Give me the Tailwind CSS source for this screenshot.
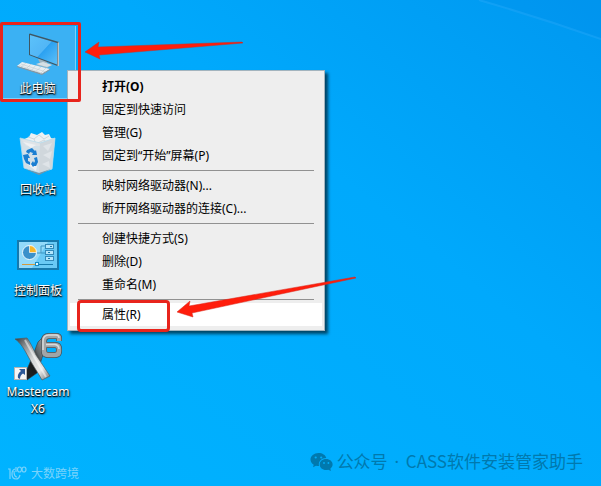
<!DOCTYPE html>
<html lang="zh-CN">

<head>
    <meta charset="UTF-8">
    <meta name="viewport" content="width=device-width, initial-scale=1.0">
    <title>此电脑</title>
    <script src="https://cdn.jsdelivr.net/npm/@tailwindcss/browser@4"></script>
</head>

<body class="font-['Noto_Sans','Noto_Sans_CJK_SC',sans-serif] text-xs">
    <main class="relative flex flex-col min-h-screen overflow-hidden bg-linear-to-bl from-[#0098f0] via-[#00a9fc] via-40% to-[#00b3ff]">
        <!-- light ray -->
        <svg class="absolute top-0 right-0 w-[130px] h-12" viewBox="0 0 130 48" fill="none">
            <path d="M8 0 L130 39 V0 Z" fill="#0090ea" opacity=".3" />
            <path d="M8 0 Q70 18 130 39" stroke="#35b4ff" stroke-width="2" opacity=".3" />
        </svg>

        <!-- desktop icons -->
        <nav class="flex flex-col items-start gap-7 w-[76px] pt-[26px] text-white leading-[17px]">
            <button class="flex flex-col items-center gap-[3px] w-full h-[73px] pt-[3px] bg-[#3bb1f3] border-r border-b border-[#7fd0fa]">
                <svg class="size-12 shrink-0" viewBox="0 0 48 48">
                    <defs>
                        <linearGradient id="screen" x1="0" y1="0" x2="1" y2="1">
                            <stop offset="0" stop-color="#5cc2fa" />
                            <stop offset=".5" stop-color="#52b6f6" />
                            <stop offset=".52" stop-color="#2ba1f1" />
                            <stop offset="1" stop-color="#5cc0f8" />
                        </linearGradient>
                    </defs>
                    <path d="M24 30 L33 31 V34 L38 36 L33 39 L22 36 L26 34 Z" fill="#9eb5c1" />
                    <path d="M22 35 L29 33 L38 36 L33 38 Z" fill="#d5e0e5" />
                    <path d="M15 5 L16 4.500 L45 13 V37 L43.500 37 L15 26 Z" fill="#3f5763" />
                    <path d="M16 6 L43 14 V35.500 L16 25.500 Z" fill="url(#screen)" />
                    <path d="M43.500 14 L45 13 V37 L43.500 37 Z" fill="#b9c6cc" />
                    <path d="M8 33 L36 40 L28 45 L3 37 Z" fill="#e8eef1" />
                    <path d="M3 37 L28 44.500 L36 40 V41 L28 46 L3 38 Z" fill="#8796a0" />
                    <path d="M7 35 L32 43 M5 36.500 L29 44.500 M12 34 L7 38 M17 35 L12 40 M22 36 L17 42 M27 38 L21 43 M32 39 L26 45" stroke="#b8c4ca" stroke-width=".5" />
                </svg>
                <span class="[text-shadow:1px_1px_2px_#000,0_1px_1px_#000]">此电脑</span>
            </button>

            <button class="flex flex-col items-center gap-[3px] w-full h-[73px] pt-[3px]">
                <svg class="size-12 shrink-0" viewBox="0 0 48 48">
                    <path d="M8 10 L15 7 L17 3 L23 5 L28 2 L31 5 L35 4 L37 8 L41 9 L37 16 H12 Z" fill="#edf1f3" />
                    <path d="M14 7 L20 9 L25 5 L30 9 L35 6 M20 9 L22 14 L30 10 L35 14" fill="none" stroke="#cfd7dc" stroke-width="1" />
                    <path d="M6 8 L26 13 L41 8 L38 39 L25 43 L10 38 Z" fill="#dde3e7" fill-opacity=".95" />
                    <path d="M26 13 L41 8 L38 39 L25 43 Z" fill="#d0d7dc" />
                    <path d="M29 16 L38 13 L34 21 Z M29 25 L38 21 L36 29 Z M28 34 L35 31 L36 38 Z" fill="#dfe4e8" />
                    <path d="M9 12 L22 15 L17 18 Z M13 34 L23 36 L22 41 Z" fill="#eef1f3" />
                    <path d="M6 8 L26 13 L41 8 M6 8 L10 38 L25 43 L38 39 L41 8" fill="none" stroke="#b5dcee" stroke-width=".8" />
                    <path d="M11 39 L25 43 L37 39 L25 45 Z" fill="#7795a6" />
                    <!-- recycle arrows -->
                    <path d="M13 20 L18 18 L21 21 L22 20 L23 25 L18 25 L19 23 L16 22 L15 24 L12 22 Z" fill="#1a7fd2" />
                    <path d="M9 25 L14 24 L16 28 L14 28 L14 31 L16 32 L16 35 L12 33 L10 29 Z" fill="#1a7fd2" />
                    <path d="M20 28 L23 27 L24 32 L22 36 L20 36 L19 37 L17 34 L19 31 L20 33 L21 31 Z" fill="#1a7fd2" />
                </svg>
                <span class="[text-shadow:1px_1px_2px_#000,0_1px_1px_#000]">回收站</span>
            </button>

            <button class="flex flex-col items-center gap-[3px] w-full h-[73px] pt-[3px]">
                <svg class="size-12 shrink-0" viewBox="0 0 48 48">
                    <rect x="3" y="9" width="42" height="30" fill="#1679ad" />
                    <rect x="5" y="11" width="38" height="26" fill="#69c9f5" />
                    <path d="M5 11 H34 L18 37 H5 Z" fill="#93dafa" />
                    <circle cx="15.500" cy="21.500" r="7" fill="#3a91cb" stroke="#eefaff" stroke-width="1" />
                    <path d="M15.500 21.500 V14.500 A7 7 0 0 1 22.500 21.500 Z" fill="#f8b72b" stroke="#fff" stroke-width=".7" />
                    <path d="M23 22 H27 V15 H31 M27 22 H31" fill="none" stroke="#3d95c2" stroke-width="1" />
                    <g fill="#b4e6fc" stroke="#3489b8">
                        <rect x="31.500" y="13.500" width="8" height="4" />
                        <rect x="31.500" y="19.500" width="8" height="4" />
                        <rect x="31.500" y="25.500" width="8" height="4" />
                    </g>
                    <path d="M36 15.500 H38 M34 21.500 H36 M34 27.500 H36" stroke="#167bae" />
                    <path d="M8 33.500 H22" stroke="#d29a3d" />
                    <path d="M24 33.500 H39" stroke="#167bae" />
                    <rect x="21.500" y="31.500" width="3" height="3" fill="#e7f9ff" stroke="#168bc4" />
                </svg>
                <span class="[text-shadow:1px_1px_2px_#000,0_1px_1px_#000]">控制面板</span>
            </button>

            <button class="flex flex-col items-center gap-[3px] w-full pt-[3px]">
                <svg class="size-12 shrink-0 overflow-visible" viewBox="0 0 48 48">
                    <defs>
                        <linearGradient id="metal" x1="0" y1="0" x2="1" y2="1">
                            <stop offset="0" stop-color="#32383c" />
                            <stop offset=".25" stop-color="#8d9295" />
                            <stop offset=".5" stop-color="#d4d6d7" />
                            <stop offset=".75" stop-color="#e8e8e8" />
                            <stop offset="1" stop-color="#6d7376" />
                        </linearGradient>
                        <linearGradient id="dark" x1="1" y1="0" x2="0" y2="1">
                            <stop offset="0" stop-color="#aeb3b5" />
                            <stop offset=".4" stop-color="#5c6266" />
                            <stop offset=".55" stop-color="#16191b" />
                            <stop offset="1" stop-color="#202326" />
                        </linearGradient>
                    </defs>
                    <path d="M24 10 L32 2 L31 17 L23 41 L13 48 L11 42 L17 28 Z" fill="url(#dark)" stroke="#343b40" stroke-width=".6" />
                    <path d="M1 7 L13 6 C16 10 19 16 22 23 L36 44 L28 48 C23 39 18 32 15 26 C10 17 7 11 1 7 Z" fill="url(#metal)" stroke="#53595c" stroke-width=".7" />
                    <path d="M11 8 L22 28 L32 45" fill="none" stroke="#fff" stroke-width="2" opacity=".5" />
                    <path d="M45 9 V6 Q45 4 42 4 H35 Q30 4 30 9 V19 Q30 23 34 23 H41 Q45 23 45 19 V17 Q45 13 41 13 H32" fill="none" stroke="#4a5054" stroke-width="6" />
                    <path d="M45 9 V6 Q45 4 42 4 H35 Q30 4 30 9 V19 Q30 23 34 23 H41 Q45 23 45 19 V17 Q45 13 41 13 H32" fill="none" stroke="#a0a5a8" stroke-width="4.500" />
                    <path d="M45 6 Q45 3 42 3 H35 Q29 3 29 9 V18 M32 12.500 H41 Q45 13 45 17" fill="none" stroke="#d9dbdc" stroke-width="1.500" />
                    <!-- shortcut badge -->
                    <rect x="0.500" y="35.500" width="12" height="12" fill="#f5f5f5" stroke="#b4b4b4" />
                    <path d="M5 37 H11 V43 L9 41.500 Q6 43 6 47 L4 46 Q3 42 7 39 Z" fill="#2b5797" />
                </svg>
                <span class="[text-shadow:1px_1px_2px_#000,0_1px_1px_#000]">Mastercam X6</span>
            </button>
        </nav>

        <!-- context menu -->
        <ul role="menu" class="absolute left-[67px] top-[70px] w-[258px] py-1 px-0.5 bg-[#eeeeee] border border-[#a3b4be] shadow-[3px_3px_3px_rgba(0,0,0,0.6)] text-black leading-[23px]">
            <li><button role="menuitem" class="block w-full h-[23px] pl-8 text-left font-bold hover:bg-white">打开(O)</button></li>
            <li><button role="menuitem" class="block w-full h-[23px] pl-8 text-left hover:bg-white">固定到快速访问</button></li>
            <li><button role="menuitem" class="block w-full h-[23px] pl-8 text-left hover:bg-white">管理(G)</button></li>
            <li><button role="menuitem" class="block w-full h-[23px] pl-8 text-left hover:bg-white">固定到“开始”屏幕(P)</button></li>
            <li role="separator" class="h-px my-[3px] mx-2 bg-[#919191]"></li>
            <li><button role="menuitem" class="block w-full h-[23px] pl-8 text-left hover:bg-white">映射网络驱动器(N)...</button></li>
            <li><button role="menuitem" class="block w-full h-[23px] pl-8 text-left hover:bg-white">断开网络驱动器的连接(C)...</button></li>
            <li role="separator" class="h-px my-[3px] mx-2 bg-[#919191]"></li>
            <li><button role="menuitem" class="block w-full h-[23px] pl-8 text-left hover:bg-white">创建快捷方式(S)</button></li>
            <li><button role="menuitem" class="block w-full h-[23px] pl-8 text-left hover:bg-white">删除(D)</button></li>
            <li><button role="menuitem" class="block w-full h-[23px] pl-8 text-left hover:bg-white">重命名(M)</button></li>
            <li role="separator" class="h-px my-[3px] mx-2 bg-[#919191]"></li>
            <li><button role="menuitem" class="block w-full h-[23px] pl-8 text-left bg-white">属性(R)</button></li>
        </ul>

        <!-- red marks -->
        <div class="absolute left-0 top-[22px] w-[81px] h-20 border-3 border-[#e8241c] rounded-xs pointer-events-none"></div>
        <div class="absolute left-[77px] top-[300px] w-[93px] h-8 border-3 border-[#e8241c] rounded-sm pointer-events-none"></div>
        <svg class="absolute left-[84px] top-10 w-40 h-7 pointer-events-none" viewBox="0 0 160 28">
            <path d="M1 12 L15 2 L14 7 L158 2 L159 3 L15 15 L16 19 Z" fill="#ff1d0b" stroke="#c72f24" stroke-width=".5" />
        </svg>
        <svg class="absolute left-[176px] top-[275px] w-[182px] h-[46px] pointer-events-none" viewBox="0 0 182 46">
            <path d="M1 37 L14 26 L13 31 L179 2 L180 3 L16 38 L17 42 Z" fill="#ff1d0b" stroke="#d7281c" stroke-width=".5" />
        </svg>

        <!-- watermarks -->
        <footer class="flex items-end justify-between mt-auto pl-[7px] pr-[18px] pb-1 font-['Noto_Sans_CJK_SC',sans-serif]">
            <div class="flex items-center gap-1 text-[#79d2fb] leading-[18px]">
                <svg class="w-5 h-4" viewBox="0 0 20 16" fill="none" stroke="currentColor" stroke-width="1.200">
                    <path d="M1 4 H3 V14 M8 4 Q5 5 5 9 Q5 14 9 14 Q12 14 13 10 M7 6 Q7 12 10 12" />
                    <path d="M9 2 V7" />
                    <ellipse cx="12.500" cy="4.500" rx="2" ry="2.500" />
                    <ellipse cx="17" cy="4.500" rx="2" ry="2.500" />
                </svg>
                <span>大数跨境</span>
            </div>
            <div class="flex items-center gap-1 pb-2 text-[17px] leading-6 text-[#0079ae]">
                <svg class="w-[23px] h-5" viewBox="0 0 23 20" fill="currentColor">
                    <path d="M8.500 1 C4 1 .5 4 .5 7.500 C.5 9.700 1.800 11.500 3.700 12.700 L3 15.300 L6 13.700 C7 14 8 14 9 14 C8 9.500 11.500 6 16.300 6 C15.600 3 12.400 1 8.500 1 Z" />
                    <path d="M16 7 C12.400 7 9.700 9.400 9.700 12.500 C9.700 15.500 12.400 18 16 18 C16.800 18 17.600 17.900 18.300 17.700 L21 19 L20.300 16.700 C21.700 15.700 22.600 14.200 22.600 12.500 C22.600 9.400 19.700 7 16 7 Z" />
                    <g fill="#00aefb">
                        <circle cx="5.700" cy="5.500" r="1.100" />
                        <circle cx="11.200" cy="5.500" r="1.100" />
                        <circle cx="14" cy="11" r=".9" />
                        <circle cx="18.400" cy="11" r=".9" />
                    </g>
                </svg>
                <span>公众号 <span class="mx-[3px] font-['Noto_Sans']">·</span> CASS软件安装管家助手</span>
            </div>
        </footer>
    </main>
</body>

</html>
